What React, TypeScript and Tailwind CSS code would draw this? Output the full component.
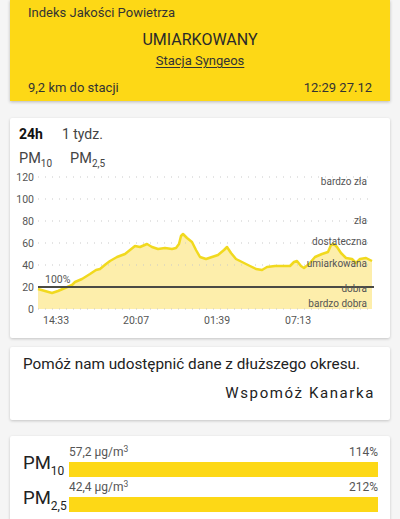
import React from "react";

const FONT = { fontFamily: "Roboto, 'Noto Sans', sans-serif" };

// points of the PM10 curve, in page pixels
const curve: [number, number][] = [
  [38, 291], [45, 293], [52, 295], [58, 293], [65, 290], [72, 287], [75, 284], [82, 281],
  [90, 276], [96, 272], [100, 271], [106, 266], [110, 263], [117, 259], [125, 256],
  [130, 252], [135, 248], [140, 249], [147, 246], [152, 249], [158, 251], [165, 250],
  [172, 251], [176, 250], [179, 246], [181, 238], [183, 236], [187, 240], [192, 244],
  [196, 252], [200, 259], [206, 261], [212, 259], [218, 257], [224, 252], [227, 249],
  [231, 255], [236, 261], [242, 264], [250, 268], [256, 271], [262, 272], [267, 269],
  [275, 268], [285, 268], [290, 268], [294, 264], [297, 263], [301, 268], [304, 270],
  [309, 266], [315, 259], [322, 256], [328, 254], [331, 247], [334, 246], [337, 249],
  [341, 255], [346, 260], [352, 261], [356, 265], [360, 261], [366, 260], [372, 263],
];

const gridYs = [179, 201, 223, 245, 267, 289, 311];
const yLabels = ["120", "100", "80", "60", "40", "20", "0"];

const levels = [
  { text: "bardzo zła", y: 187 },
  { text: "zła", y: 226 },
  { text: "dostateczna", y: 247 },
  { text: "umiarkowana", y: 269 },
  { text: "dobra", y: 294 },
  { text: "bardzo dobra", y: 309 },
];

const times = [
  { text: "14:33", x: 43 },
  { text: "20:07", x: 123 },
  { text: "01:39", x: 204 },
  { text: "07:13", x: 285 },
];

const Chart = () => {
  const line = curve.map(([x, y], i) => `${i ? "L" : "M"}${x} ${y}`).join(" ");
  const area = `${line} L372 311 L38 311 Z`;
  return (
    <svg className="block" width="380" height="162" viewBox="10 170 380 162">
      <path d={area} fill="#fdeb9c" opacity="0.85" />
      {gridYs.map((y) => (
        <line key={y} x1="38" x2="374" y1={y} y2={y} stroke="#c9c9c9" strokeWidth="1" strokeDasharray="1 6" />
      ))}
      <path d={line} fill="none" stroke="#f1d91e" strokeWidth="2.5" strokeLinejoin="round" />
      <line x1="38" x2="374" y1="289" y2="289" stroke="#4a4a44" strokeWidth="2" />
      {yLabels.map((t, i) => (
        <text key={t} x="34" y={gridYs[i] + 4} textAnchor="end" fontSize="10.5" fill="#555">{t}</text>
      ))}
      {levels.map((l) => (
        <text key={l.text} x="367" y={l.y} textAnchor="end" fontSize="10" fill="#555">{l.text}</text>
      ))}
      <text x="45" y="285" fontSize="10.5" fill="#555">100%</text>
      {times.map((t) => (
        <text key={t.text} x={t.x} y="326" fontSize="10.5" fill="#555">{t.text}</text>
      ))}
    </svg>
  );
};

const Pm = ({ sub, big }: { sub: string; big?: boolean }) => (
  <span>
    PM
    <span className={big ? "relative top-[6px] text-[12px]" : "relative top-[4px] text-[10px]"}>{sub}</span>
  </span>
);

const Bar = ({ sub, value, pct }: { sub: string; value: string; pct: string }) => (
  <div className="flex items-end">
    <div className="w-[59px] pl-[13px] pb-[1px] text-[18.5px] text-[#222] leading-[22px]">
      <Pm sub={sub} big />
    </div>
    <div className="flex-1">
      <div className="flex justify-between text-[12px] text-[#555] leading-[15px]">
        <span>
          {value} µg/m<span className="relative top-[-4px] text-[8.5px]">3</span>
        </span>
        <span>{pct}</span>
      </div>
      <div className="mt-[1px] h-[15px] bg-[#fdd816]" />
    </div>
  </div>
);

export default function App() {
  return (
    <div className="w-[400px] h-[519px] overflow-hidden bg-[#f5f5f5] px-[10px]" style={FONT}>
      {/* index card */}
      <div className="h-[101px] bg-[#fdd816] shadow-[0_1px_3px_rgba(0,0,0,0.25)] px-[18px] text-[#333]">
        <div className="pt-[4px] text-[13px] leading-[18px]">Indeks Jakości Powietrza</div>
        <div className="mt-[7px] text-center text-[16px] leading-[22px] text-[#2a2a2a]">UMIARKOWANY</div>
        <div className="mt-[1px] text-center text-[13px] leading-[18px] underline underline-offset-2">Stacja Syngeos</div>
        <div className="mt-[9px] flex justify-between text-[13px] leading-[18px]">
          <span>9,2 km do stacji</span>
          <span>12:29 27.12</span>
        </div>
      </div>

      {/* chart card */}
      <div className="mt-[17px] h-[220px] bg-white rounded-[2px] shadow-[0_1px_3px_rgba(0,0,0,0.2)]">
        <div className="flex items-center gap-[19px] pl-[9px] pt-[7px] text-[14px] leading-[18px]">
          <span className="font-bold text-[#111]">24h</span>
          <span className="text-[#444]">1 tydz.</span>
        </div>
        <div className="flex gap-[18px] pl-[9px] pt-[7px] text-[14.5px] leading-[18px] text-[#444]">
          <Pm sub="10" />
          <Pm sub="2,5" />
        </div>
        <div className="mt-[-1px]">
          <Chart />
        </div>
      </div>

      {/* support card */}
      <div className="mt-[9px] h-[73px] bg-white rounded-[2px] shadow-[0_1px_3px_rgba(0,0,0,0.2)] px-[13px] text-[#222]">
        <div className="pt-[7px] text-[15.3px] leading-[20px]">Pomóż nam udostępnić dane z dłuższego okresu.</div>
        <div className="mt-[9px] text-right pr-[2px] text-[15px] leading-[20px] tracking-[1.6px]">Wspomóż Kanarka</div>
      </div>

      {/* pm values card */}
      <div className="mt-[16px] h-[90px] bg-white rounded-[2px] shadow-[0_1px_3px_rgba(0,0,0,0.2)] pr-[12px] pt-[9px] flex flex-col gap-[3px]">
        <Bar sub="10" value="57,2" pct="114%" />
        <Bar sub="2,5" value="42,4" pct="212%" />
      </div>
    </div>
  );
}
